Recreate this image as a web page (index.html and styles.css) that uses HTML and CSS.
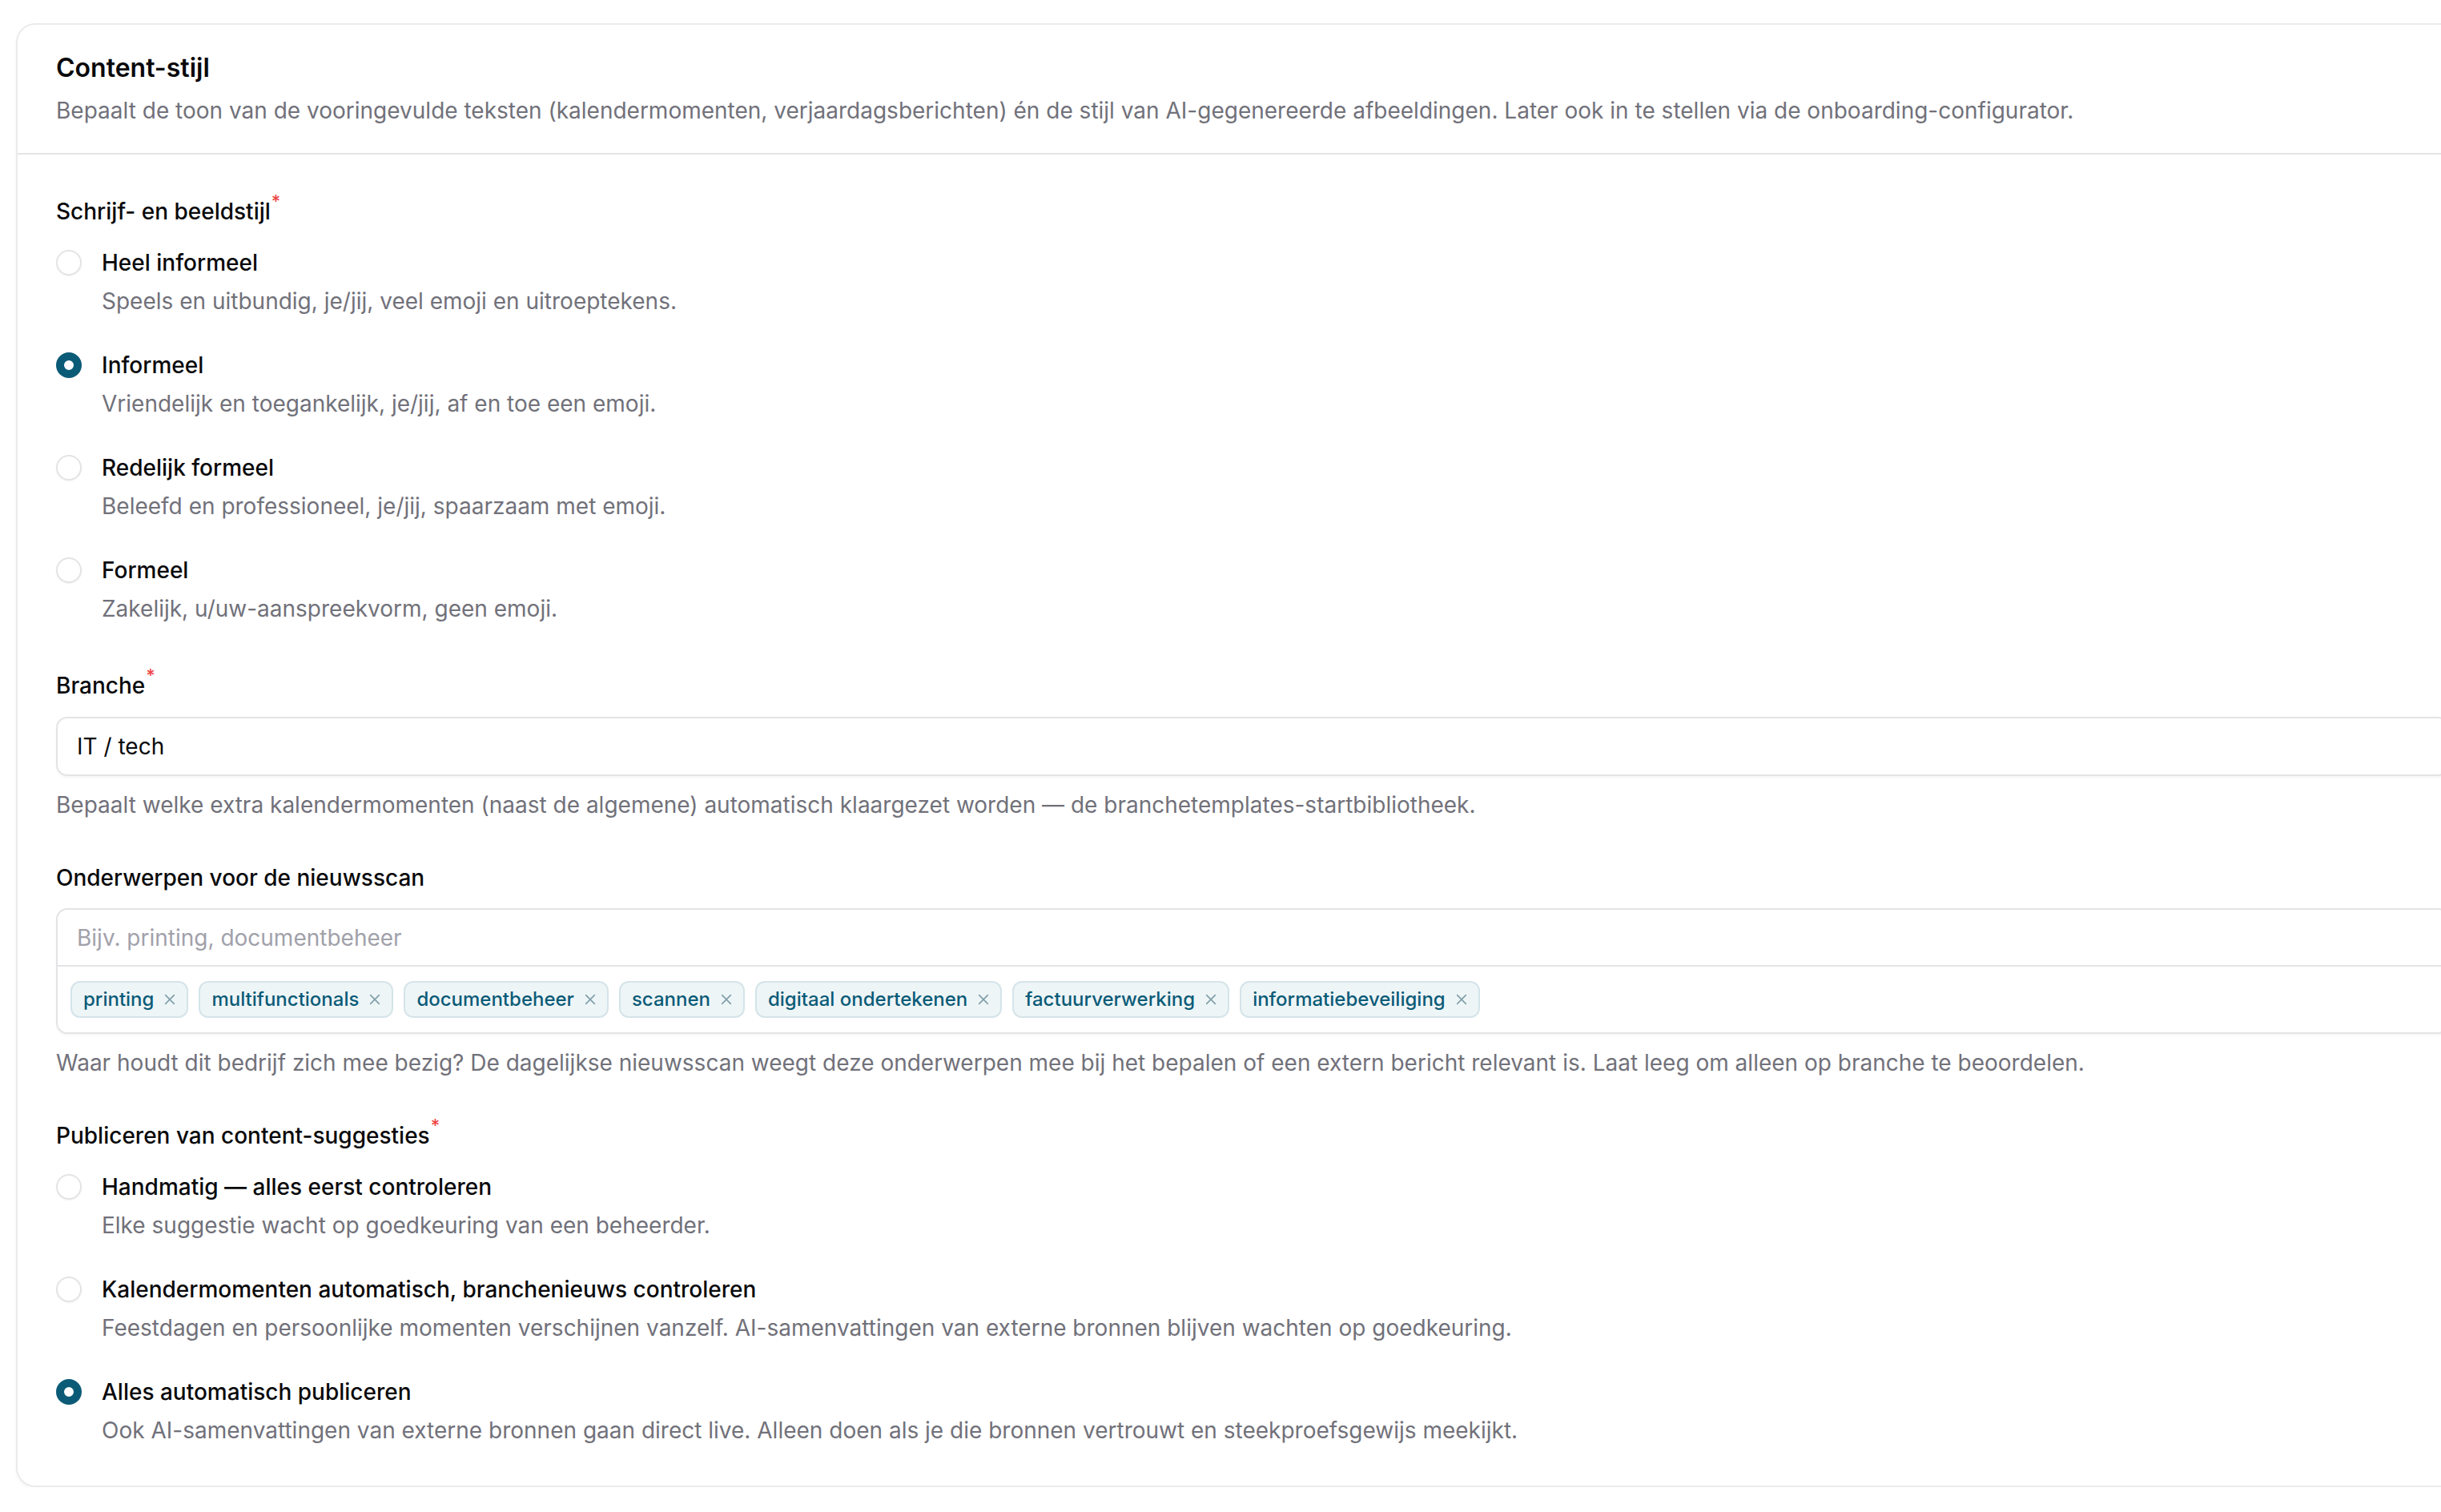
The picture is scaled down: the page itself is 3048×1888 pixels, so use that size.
FILE: index.html
```html
<!DOCTYPE html>
<html lang="nl">
<head>
  <meta charset="UTF-8">
  <title>Content-stijl</title>
  <link rel="stylesheet" href="styles.css">
</head>
<body>

<div class="kaart">
  <!-- kop van de kaart -->
  <div class="kaart-kop">
    <h2>Content-stijl</h2>
    <p>Bepaalt de toon van de vooringevulde teksten (kalendermomenten, verjaardagsberichten) én de stijl van AI-gegenereerde afbeeldingen. Later ook in te stellen via de onboarding-configurator.</p>
  </div>

  <div class="kaart-inhoud">
    <!-- schrijfstijl -->
    <div class="veld">
      <div class="veld-label">Schrijf- en beeldstijl<sup class="verplicht">*</sup></div>
      <div class="opties">
        <label class="optie">
          <input type="radio" name="stijl" value="heel-informeel">
          <span class="optie-tekst">
            <span class="optie-titel">Heel informeel</span>
            <span class="optie-uitleg">Speels en uitbundig, je/jij, veel emoji en uitroeptekens.</span>
          </span>
        </label>
        <label class="optie">
          <input type="radio" name="stijl" value="informeel" checked>
          <span class="optie-tekst">
            <span class="optie-titel">Informeel</span>
            <span class="optie-uitleg">Vriendelijk en toegankelijk, je/jij, af en toe een emoji.</span>
          </span>
        </label>
        <label class="optie">
          <input type="radio" name="stijl" value="redelijk-formeel">
          <span class="optie-tekst">
            <span class="optie-titel">Redelijk formeel</span>
            <span class="optie-uitleg">Beleefd en professioneel, je/jij, spaarzaam met emoji.</span>
          </span>
        </label>
        <label class="optie">
          <input type="radio" name="stijl" value="formeel">
          <span class="optie-tekst">
            <span class="optie-titel">Formeel</span>
            <span class="optie-uitleg">Zakelijk, u/uw-aanspreekvorm, geen emoji.</span>
          </span>
        </label>
      </div>
    </div>

    <!-- branche -->
    <div class="veld">
      <div class="veld-label">Branche<sup class="verplicht">*</sup></div>
      <input type="text" class="invoer" value="IT / tech">
      <p class="hulptekst">Bepaalt welke extra kalendermomenten (naast de algemene) automatisch klaargezet worden — de branchetemplates-startbibliotheek.</p>
    </div>

    <!-- onderwerpen -->
    <div class="veld">
      <div class="veld-label">Onderwerpen voor de nieuwsscan</div>
      <div class="tagveld">
        <input type="text" class="tag-invoer" placeholder="Bijv. printing, documentbeheer">
        <div class="tags">
          <span class="tag">printing<svg viewBox="0 0 12 12"><path d="M2 2l8 8M10 2l-8 8"/></svg></span>
          <span class="tag">multifunctionals<svg viewBox="0 0 12 12"><path d="M2 2l8 8M10 2l-8 8"/></svg></span>
          <span class="tag">documentbeheer<svg viewBox="0 0 12 12"><path d="M2 2l8 8M10 2l-8 8"/></svg></span>
          <span class="tag">scannen<svg viewBox="0 0 12 12"><path d="M2 2l8 8M10 2l-8 8"/></svg></span>
          <span class="tag">digitaal ondertekenen<svg viewBox="0 0 12 12"><path d="M2 2l8 8M10 2l-8 8"/></svg></span>
          <span class="tag">factuurverwerking<svg viewBox="0 0 12 12"><path d="M2 2l8 8M10 2l-8 8"/></svg></span>
          <span class="tag">informatiebeveiliging<svg viewBox="0 0 12 12"><path d="M2 2l8 8M10 2l-8 8"/></svg></span>
        </div>
      </div>
      <p class="hulptekst">Waar houdt dit bedrijf zich mee bezig? De dagelijkse nieuwsscan weegt deze onderwerpen mee bij het bepalen of een extern bericht relevant is. Laat leeg om alleen op branche te beoordelen.</p>
    </div>

    <!-- publiceren -->
    <div class="veld">
      <div class="veld-label">Publiceren van content-suggesties<sup class="verplicht">*</sup></div>
      <div class="opties">
        <label class="optie">
          <input type="radio" name="publiceren" value="handmatig">
          <span class="optie-tekst">
            <span class="optie-titel">Handmatig — alles eerst controleren</span>
            <span class="optie-uitleg">Elke suggestie wacht op goedkeuring van een beheerder.</span>
          </span>
        </label>
        <label class="optie">
          <input type="radio" name="publiceren" value="half">
          <span class="optie-tekst">
            <span class="optie-titel">Kalendermomenten automatisch, branchenieuws controleren</span>
            <span class="optie-uitleg">Feestdagen en persoonlijke momenten verschijnen vanzelf. AI-samenvattingen van externe bronnen blijven wachten op goedkeuring.</span>
          </span>
        </label>
        <label class="optie">
          <input type="radio" name="publiceren" value="automatisch" checked>
          <span class="optie-tekst">
            <span class="optie-titel">Alles automatisch publiceren</span>
            <span class="optie-uitleg">Ook AI-samenvattingen van externe bronnen gaan direct live. Alleen doen als je die bronnen vertrouwt en steekproefsgewijs meekijkt.</span>
          </span>
        </label>
      </div>
    </div>
  </div>
</div>

</body>
</html>
```

FILE: styles.css
```css
html,
body {
  overflow: hidden;
}

body {
  margin: 0;
  background-color: #ffffff;
  font-family: Inter, "Liberation Sans", sans-serif;
  color: #09090b;
  font-size: 28px;
  line-height: 40px;
}

/* kaart */
.kaart {
  margin: 29px -60px 0 20px;
  background-color: #ffffff;
  border: 2px solid #ebebeb;
  border-radius: 24px;
  box-shadow: 0 2px 4px rgba(0, 0, 0, 0.04);
}

.kaart-kop {
  padding: 30px 48px 33px;
  border-bottom: 2px solid #e4e4e7;
}

.kaart-kop h2 {
  margin: 0;
  font-size: 32px;
  line-height: 48px;
  font-weight: 580;
}

.kaart-kop p {
  margin: 9px 0 0;
  color: #71717a;
}

.kaart-inhoud {
  padding: 51px 48px 44px;
  display: flex;
  flex-direction: column;
  gap: 51px;
}

/* velden */
.veld-label {
  font-weight: 460;
}

.verplicht {
  color: #ef4444;
  font-size: 22px;
  line-height: 0;
  margin-left: 1px;
  vertical-align: 15px;
}

.hulptekst {
  margin: 16px 0 0;
  color: #71717a;
}

.invoer {
  display: block;
  box-sizing: border-box;
  width: 100%;
  height: 74px;
  margin-top: 19px;
  padding: 0 24px;
  border: 2px solid #e4e4e7;
  border-radius: 14px;
  box-shadow: 0 2px 3px rgba(0, 0, 0, 0.04);
  font-family: inherit;
  font-size: 28px;
  color: #09090b;
  outline: none;
}

/* radio-opties */
.opties {
  margin: 24px 0 5px;
  display: flex;
  flex-direction: column;
  gap: 40px;
}

.optie {
  display: flex;
  align-items: flex-start;
  gap: 25px;
  cursor: pointer;
}

.optie input {
  appearance: none;
  flex-shrink: 0;
  width: 32px;
  height: 32px;
  margin: 4px 0 0;
  border: 2px solid #e4e4e7;
  border-radius: 50%;
  background-color: #ffffff;
  box-shadow: 0 1px 2px rgba(0, 0, 0, 0.05);
}

.optie input:checked {
  border: 10px solid #0b5b77;
  background-color: #ffffff;
}

.optie-tekst {
  display: flex;
  flex-direction: column;
  gap: 8px;
}

.optie-titel {
  font-weight: 460;
}

.optie-uitleg {
  color: #71717a;
}

/* onderwerpen met tags */
.tagveld {
  margin-top: 18px;
  border: 2px solid #e4e4e7;
  border-radius: 14px;
  box-shadow: 0 2px 3px rgba(0, 0, 0, 0.04);
}

.tag-invoer {
  display: block;
  box-sizing: border-box;
  width: 100%;
  height: 71px;
  padding: 0 24px;
  border: none;
  border-bottom: 2px solid #e4e4e7;
  border-radius: 14px 14px 0 0;
  font-family: inherit;
  font-size: 28px;
  outline: none;
}

.tag-invoer::placeholder {
  color: #a1a1aa;
}

.tags {
  display: flex;
  flex-wrap: wrap;
  gap: 13px;
  padding: 18px 16px 18px;
}

.tag {
  display: inline-flex;
  align-items: center;
  gap: 12px;
  box-sizing: border-box;
  height: 46px;
  padding: 0 13px 0 14px;
  background-color: #eef5f7;
  border: 2px solid #d4e4e9;
  border-radius: 12px;
  color: #0b5b77;
  font-size: 24px;
  font-weight: 450;
}

.tag svg {
  width: 16px;
  height: 16px;
  fill: none;
  stroke: #7e9ea8;
  stroke-width: 1.2;
  stroke-linecap: round;
}
```
